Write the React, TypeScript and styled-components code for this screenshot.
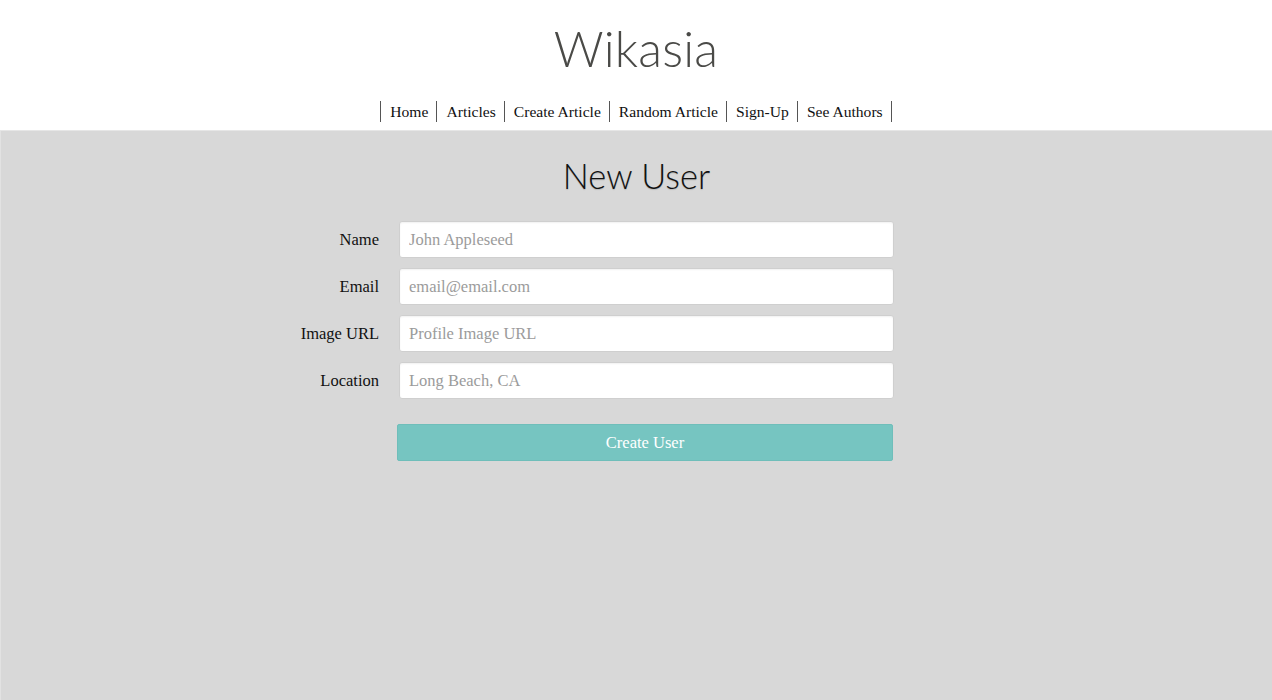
import styled, { createGlobalStyle } from "styled-components";

const GlobalStyle = createGlobalStyle`
  html, body {
    margin: 0;
    padding: 0;
    height: 100%;
  }
  body {
    background: #d8d8d8;
    font-family: "Liberation Serif", "DejaVu Serif", serif;
  }
  #root {
    min-height: 100%;
    display: flex;
    flex-direction: column;
  }
`;

const Header = styled.header`
  background: #ffffff;
  height: 131px;
  display: flex;
  flex-direction: column;
  align-items: center;
  border-bottom: 1px solid #e6e6e6;
  box-sizing: border-box;
`;

const Logo = styled.h1`
  margin: 20px 0 0;
  font-family: Lato, "Open Sans", sans-serif;
  font-weight: 300;
  font-size: 49px;
  line-height: 56px;
  color: #4a4a47;
  letter-spacing: 0.2px;
`;

const Nav = styled.nav`
  margin-top: 25px;
  display: flex;
  border-left: 1px solid #555;
`;

const NavLink = styled.a`
  font-size: 15.6px;
  line-height: 21px;
  color: #111;
  padding: 0 8px 0 9px;
  border-right: 1px solid #555;
  text-decoration: none;
  cursor: pointer;
`;

const Main = styled.main`
  flex: 1;
  display: flex;
  flex-direction: column;
  align-items: center;
  border-left: 1px solid #e2e2e2;
`;

const Title = styled.h2`
  margin: 24px 0 24px;
  font-family: Lato, "Open Sans", sans-serif;
  font-weight: 300;
  font-size: 34.5px;
  line-height: 42px;
  color: #111;
  text-shadow: 0 1px 1px rgba(0, 0, 0, 0.15);
`;

const Form = styled.form`
  align-self: stretch;
  display: grid;
  grid-template-columns: 1fr 495px 1fr;
  row-gap: 10px;
  padding-left: 20px;
`;

const Label = styled.label`
  grid-column: 1;
  justify-self: end;
  align-self: center;
  padding-right: 20px;
  font-size: 16.5px;
  color: #111;
`;

const Input = styled.input`
  grid-column: 2;
  height: 37px;
  box-sizing: border-box;
  border: 1px solid #cfcfcf;
  border-radius: 3px;
  background: #fff;
  padding: 0 9px;
  font-family: "Liberation Serif", "DejaVu Serif", serif;
  font-size: 16.5px;
  color: #333;
  box-shadow: inset 0 1px 2px rgba(0, 0, 0, 0.06);
  &::placeholder {
    color: #9b9b9b;
  }
`;

const Button = styled.button`
  grid-column: 2;
  margin: 15px 0 0 -2px;
  height: 37px;
  width: 496px;
  border: 1px solid #6fbeba;
  border-radius: 2px;
  background: #76c5c1;
  color: #fff;
  font-family: "Liberation Serif", "DejaVu Serif", serif;
  font-size: 16.5px;
  cursor: pointer;
`;

const links = ["Home", "Articles", "Create Article", "Random Article", "Sign-Up", "See Authors"];

const fields = [
  { label: "Name", placeholder: "John Appleseed" },
  { label: "Email", placeholder: "email@email.com" },
  { label: "Image URL", placeholder: "Profile Image URL" },
  { label: "Location", placeholder: "Long Beach, CA" },
];

export default function App() {
  return (
    <>
      <GlobalStyle />
      <Header>
        <Logo>Wikasia</Logo>
        <Nav>
          {links.map((l) => (
            <NavLink key={l}>{l}</NavLink>
          ))}
        </Nav>
      </Header>
      <Main>
        <Title>New User</Title>
        <Form onSubmit={(e) => e.preventDefault()}>
          {fields.map((f) => (
            <>
              <Label key={f.label + "-l"}>{f.label}</Label>
              <Input key={f.label} placeholder={f.placeholder} />
            </>
          ))}
          <Button type="submit">Create User</Button>
        </Form>
      </Main>
    </>
  );
}
